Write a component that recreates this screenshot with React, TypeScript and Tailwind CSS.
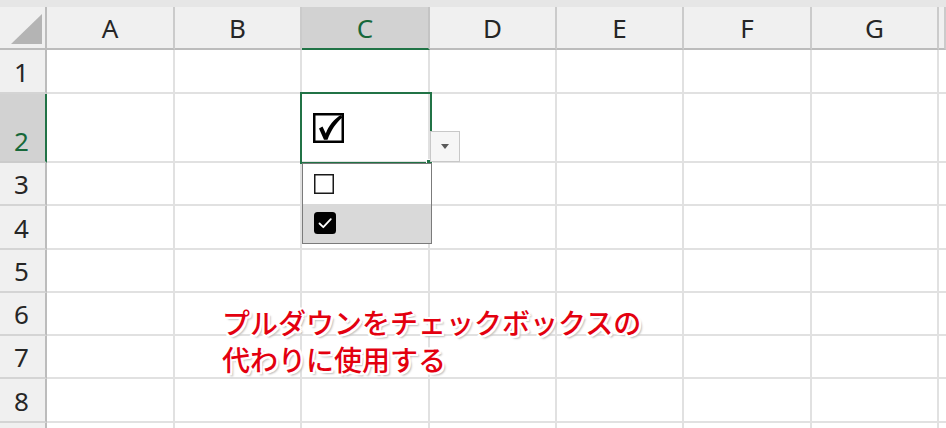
const COLS = ['A', 'B', 'C', 'D', 'E', 'F', 'G', '']
const ROWS = [1, 2, 3, 4, 5, 6, 7, 8, 9]

function BigCheck() {
  return (
    <svg width="31" height="30" viewBox="0 0 31 30">
      <rect x="1.2" y="1.2" width="28.6" height="27.6" fill="#fff" stroke="#000" strokeWidth="2.6" />
      <path d="M6 15.5 L9.5 13.5 L12.8 20.5 C15.8 12.5 21 6 28 2 L29.3 4.5 C23.5 9.5 18 17 14.5 26.8 L11 26.8 Z" fill="#000" />
    </svg>
  )
}

function EmptyBox() {
  return (
    <svg width="20" height="20" viewBox="0 0 20 20">
      <rect x="0.75" y="0.75" width="18.5" height="18.5" fill="#fff" stroke="#1a1a1a" strokeWidth="1.5" />
    </svg>
  )
}

function FilledBox() {
  return (
    <svg width="22" height="22" viewBox="0 0 22 22">
      <rect x="0" y="0" width="22" height="22" rx="3.5" fill="#000" />
      <path d="M5.5 11.5 L9.3 15.2 L16.8 7.2" fill="none" stroke="#fff" strokeWidth="1.8" strokeLinecap="round" strokeLinejoin="round" />
    </svg>
  )
}

function ColHeader({ label, selected }: { label: string; selected: boolean }) {
  return (
    <div
      className={`flex items-center justify-center border-r-2 border-b-2 text-[26px] leading-none ${
        selected
          ? 'bg-[#d2d2d2] border-r-[#c4c4c4] border-b-[#217346] text-[#17683a]'
          : 'bg-[#f0f0f0] border-r-[#cbcbcb] border-b-[#bcbcbc] text-[#262626]'
      }`}
    >
      {label}
    </div>
  )
}

function RowHeader({ n, selected }: { n: number; selected: boolean }) {
  return (
    <div
      className={`flex items-end justify-center border-r-2 border-b-2 pb-[7px] pr-[2px] text-[26px] leading-none ${
        selected
          ? 'bg-[#d2d2d2] border-r-[#217346] border-b-[#cbcbcb] text-[#17683a]'
          : 'bg-[#f0f0f0] border-r-[#bcbcbc] border-b-[#d4d4d4] text-[#262626]'
      }`}
    >
      {n < 9 ? n : ''}
    </div>
  )
}

function SelectedCell() {
  return (
    <div className="relative flex items-end border-r-2 border-b-2 border-[#e1e1e1] pb-[18px] pl-[11px]">
      <BigCheck />
      <div className="pointer-events-none absolute -left-[2px] -top-[2px] h-[72px] w-[132px] border-2 border-[#217346]" />
      <div className="absolute left-[124px] top-[65px] h-[7px] w-[7px] border border-white bg-[#217346]" />
      <div className="absolute left-[128px] top-[37px] flex h-[31px] w-[30px] items-center justify-center border border-[#c8c8c8] bg-[#f6f6f6]">
        <div className="h-0 w-0 border-x-[4.5px] border-t-[5px] border-x-transparent border-t-[#5a5a5a]" />
      </div>
      <div className="absolute left-0 top-[69px] z-10 flex w-[130px] flex-col border border-[#7b7b7b] bg-white">
        <div className="flex h-[40px] items-center pl-[11px]">
          <EmptyBox />
        </div>
        <div className="flex h-[39px] items-center bg-[#d9d9d9] pl-[11px]">
          <FilledBox />
        </div>
      </div>
    </div>
  )
}

export default function App() {
  return (
    <div className="relative h-[428px] w-[946px] overflow-hidden bg-white font-['Noto_Sans','Liberation_Sans',sans-serif]">
      <div className="h-[7px] bg-[#e6e6e6]" />
      <div className="grid grid-cols-[47px_128px_127px_128px_127px_127px_128px_127px_1fr] grid-rows-[43px_43.5px_69.5px_43.3px_43.3px_43.3px_43.3px_43.3px_43.3px_40px]">
        <div className="relative border-r-2 border-b-2 border-r-[#bcbcbc] border-b-[#bcbcbc] bg-[#f0f0f0]">
          <svg className="absolute left-[10px] top-[7px]" width="33" height="31" viewBox="0 0 33 31">
            <path d="M1 30 L32 0 L32 30 Z" fill="#b4b4b4" />
          </svg>
        </div>
        {COLS.map((c) => (
          <ColHeader key={c || 'H'} label={c} selected={c === 'C'} />
        ))}
        {ROWS.map((r) => (
          <div key={r} className="contents">
            <RowHeader n={r} selected={r === 2} />
            {COLS.map((c, i) =>
              r === 2 && c === 'C' ? (
                <SelectedCell key={c} />
              ) : (
                <div
                  key={c || 'H'}
                  className={`border-b-2 border-[#e1e1e1] ${i === 7 ? '' : 'border-r-2'}`}
                />
              )
            )}
          </div>
        ))}
      </div>
      <div className="absolute left-[222px] top-[304px] z-20 text-[28px] font-medium leading-[37px] text-[#e3000f] font-['Noto_Sans_CJK_JP',sans-serif] [text-shadow:2px_0_0_#fff,-2px_0_0_#fff,0_2px_0_#fff,0_-2px_0_#fff,2px_2px_0_#fff,-2px_-2px_0_#fff,2px_-2px_0_#fff,-2px_2px_0_#fff,3px_3px_2px_#bdbdbd]">
        <p>プルダウンをチェックボックスの</p>
        <p>代わりに使用する</p>
      </div>
    </div>
  )
}
